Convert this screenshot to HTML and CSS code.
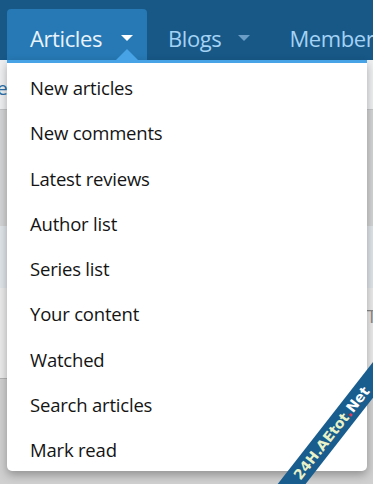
FILE: index.html
```html
<!DOCTYPE html>
<html>
<head>
<meta charset="utf-8">
<link rel="stylesheet" href="styles.css">
</head>
<body>
<header class="header">
  <nav class="nav">
    <div class="tab tab-active">
      <span class="tab-label">Articles</span>
      <span class="caret caret-white"></span>
    </div>
    <div class="tab">
      <span class="tab-label">Blogs</span>
      <span class="caret caret-muted"></span>
    </div>
    <div class="tab">
      <span class="tab-label">Members</span>
    </div>
  </nav>
</header>
<div class="page">
  <div class="subnav"><span class="subnav-text">ea</span></div>
  <div class="band band-gray"></div>
  <div class="band band-blue"></div>
  <div class="band band-light"><span class="band-t">T</span></div>
  <div class="band band-bottom"></div>
</div>

<div class="menu">
  <span class="menu-arrow"></span>
  <ul class="menu-list">
    <li class="menu-item">New articles</li>
    <li class="menu-item">New comments</li>
    <li class="menu-item">Latest reviews</li>
    <li class="menu-item">Author list</li>
    <li class="menu-item">Series list</li>
    <li class="menu-item">Your content</li>
    <li class="menu-item">Watched</li>
    <li class="menu-item">Search articles</li>
    <li class="menu-item">Mark read</li>
  </ul>
</div>

<div class="ribbon"><span class="rb-a">24H.AEtot</span><span class="rb-dot">.</span><span class="rb-b">Net</span></div>
</body>
</html>
```
FILE: styles.css
```css
* { box-sizing: border-box; }
html, body { margin: 0; padding: 0; }
html { width: 373px; height: 484px; overflow: hidden; }
body {
  width: 373px;
  height: 484px;
  overflow: hidden;
  position: relative;
  font-family: "Open Sans", "Noto Sans", sans-serif;
  background: #d0d0d0;
}
.header {
  height: 60px;
  background: #175887;
  overflow: hidden;
}
.nav {
  display: flex;
  align-items: flex-end;
  height: 60px;
  padding-left: 7px;
}
.tab {
  display: flex;
  align-items: center;
  height: 51px;
  padding: 6px 15px 0 23px;
  white-space: nowrap;
  flex-shrink: 0;
}
.tab-active {
  background: #2679b5;
  border-radius: 4px 4px 0 0;
  width: 140px;
}
.tab-label {
  font-size: 22px;
  color: #a4d2f4;
  letter-spacing: -0.4px;
}
.tab-active .tab-label { color: #e9f3fb; }
.caret {
  width: 0;
  height: 0;
  border-left: 6px solid transparent;
  border-right: 6px solid transparent;
  margin-left: 19px;
}
.caret-white { border-top: 6px solid #ffffff; }
.caret-muted { border-top: 6px solid #6b9dc7; }
.tab + .tab { padding-left: 21px; }
.tab + .tab .caret { margin-left: 17px; }
.tab + .tab + .tab { padding-left: 24px; }

.page { display: flex; flex-direction: column; }
.subnav {
  height: 50px;
  background: #eef0f2;
  border-bottom: 1px solid #c4c6c8;
  display: flex;
  align-items: center;
  padding-top: 6px;
}
.subnav-text {
  font-size: 19px;
  color: #2a6fa8;
  margin-left: -3px;
}
.band { flex-shrink: 0; }
.band-gray { height: 116px; background: #d3d4d5; }
.band-blue { height: 62px; background: #dfe5e9; }
.band-light {
  height: 91px;
  background: #ebebeb;
  border-bottom: 1px solid #b3b3b3;
  display: flex;
  justify-content: flex-end;
  padding-top: 15px;
}
.band-t {
  font-size: 19px;
  color: #8a8a8a;
  margin-right: -4px;
}
.band-bottom { height: 110px; background: #d0d0d0; }

.menu {
  position: absolute;
  left: 7px;
  top: 60px;
  width: 360px;
  height: 411px;
  background: #ffffff;
  border-top: 3px solid #47a3e6;
  border-radius: 0 0 5px 5px;
  box-shadow: 0 4px 10px rgba(0,0,0,0.3);
}
.menu-arrow {
  position: absolute;
  left: 109px;
  top: -14px;
  width: 0;
  height: 0;
  border-left: 11px solid transparent;
  border-right: 11px solid transparent;
  border-bottom: 11px solid #47a3e6;
}
.menu-list {
  list-style: none;
  margin: 0;
  padding: 2px 0 0 0;
}
.menu-item {
  font-size: 18.5px;
  line-height: 23.25px;
  padding: 11px 23px;
  color: #141414;
  letter-spacing: -0.2px;
}

.ribbon {
  position: absolute;
  left: 244px;
  top: 422px;
  width: 175px;
  height: 22px;
  background: #195d8e;
  transform: rotate(-52deg);
  transform-origin: center;
  font-family: "DejaVu Sans", sans-serif;
  font-weight: bold;
  font-size: 14px;
  line-height: 22px;
  text-align: center;
  white-space: nowrap;
}
.rb-a { color: #e9f2c8; }
.rb-dot { color: #e0334a; }
.rb-b { color: #ffffff; }
```
